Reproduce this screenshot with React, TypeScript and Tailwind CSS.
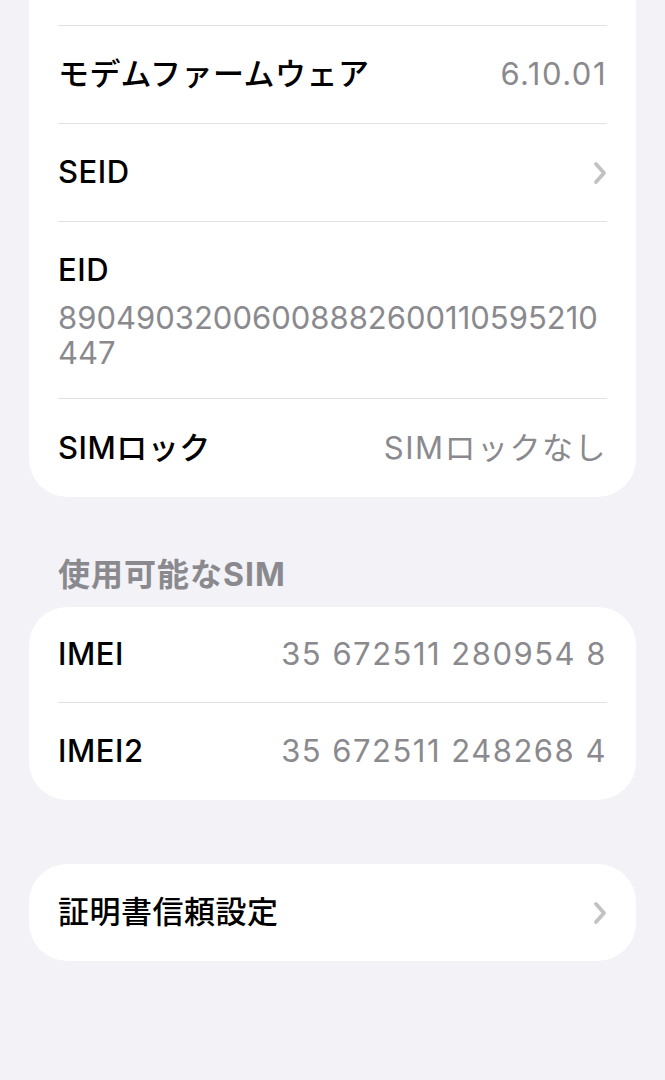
const font = { fontFamily: '"Inter", "Noto Sans CJK JP", sans-serif' };

function Chevron() {
  return (
    <svg width="14" height="24" viewBox="0 0 14 24" className="shrink-0">
      <path d="M3 3 L11 12 L3 21" fill="none" stroke="#c2c2c5" strokeWidth="3.8" strokeLinecap="round" strokeLinejoin="round" />
    </svg>
  );
}

function Row({ label, value, chevron, h, first }: { label: string; value?: string; chevron?: boolean; h: string; first?: boolean }) {
  return (
    <div className={`flex items-center justify-between ${h} ${first ? "" : "border-t border-[#e2e2e4]"}`}>
      <span className="text-[31px] font-medium tracking-[0.5px] text-black">{label}</span>
      {value && <span className="text-[31px] tracking-[1.5px] text-[#8a8a8e]">{value}</span>}
      {chevron && <Chevron />}
    </div>
  );
}

export default function App() {
  return (
    <div className="min-h-[1080px] bg-[#f2f2f7] px-[29px] antialiased" style={font}>
      {/* device info card, scrolled past its top */}
      <div className="bg-white rounded-b-[38px] px-[29px]">
        <div className="h-[25px]" />
        <Row label="モデムファームウェア" value="6.10.01" h="h-[98px]" />
        <Row label="SEID" chevron h="h-[98px]" />
        <div className="border-t border-[#e2e2e4] pt-[30px] pb-[28px]">
          <p className="text-[31px] font-medium leading-[36px] tracking-[0.5px] text-black">EID</p>
          <p className="mt-[12px] break-all text-[31px] leading-[35px] text-[#8a8a8e]">
            89049032006008882600110595210447
          </p>
        </div>
        <Row label="SIMロック" value="SIMロックなし" h="h-[99px]" />
      </div>

      <div className="pt-[60px] pb-[14px] pl-[29px]">
        <p className="text-[32px] font-bold leading-[36px] tracking-[1px] text-[#8a8a8e]">使用可能なSIM</p>
      </div>

      <div className="bg-white rounded-[38px] px-[29px]">
        <Row label="IMEI" value="35 672511 280954 8" h="h-[95px]" first />
        <Row label="IMEI2" value="35 672511 248268 4" h="h-[98px]" />
      </div>

      <div className="mt-[64px] bg-white rounded-[38px] px-[29px]">
        <Row label="証明書信頼設定" chevron h="h-[97px]" first />
      </div>
    </div>
  );
}
